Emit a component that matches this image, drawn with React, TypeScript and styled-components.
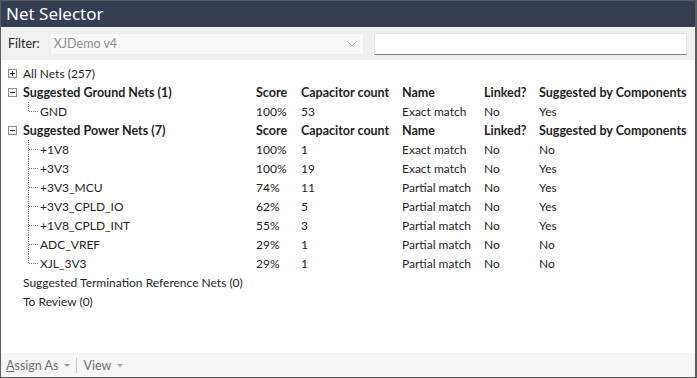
import React from 'react';
import styled, { createGlobalStyle } from 'styled-components';

interface INet {
  name: string;
  score: string;
  count: string;
  match: string;
  linked: string;
  byComponents: string;
}

const groundNets: INet[] = [
  { name: 'GND', score: '100%', count: '53', match: 'Exact match', linked: 'No', byComponents: 'Yes' },
];

const powerNets: INet[] = [
  { name: '+1V8', score: '100%', count: '1', match: 'Exact match', linked: 'No', byComponents: 'No' },
  { name: '+3V3', score: '100%', count: '19', match: 'Exact match', linked: 'No', byComponents: 'Yes' },
  { name: '+3V3_MCU', score: '74%', count: '11', match: 'Partial match', linked: 'No', byComponents: 'Yes' },
  { name: '+3V3_CPLD_IO', score: '62%', count: '5', match: 'Partial match', linked: 'No', byComponents: 'Yes' },
  { name: '+1V8_CPLD_INT', score: '55%', count: '3', match: 'Partial match', linked: 'No', byComponents: 'Yes' },
  { name: 'ADC_VREF', score: '29%', count: '1', match: 'Partial match', linked: 'No', byComponents: 'No' },
  { name: 'XJL_3V3', score: '29%', count: '1', match: 'Partial match', linked: 'No', byComponents: 'No' },
];

const columns = ['Score', 'Capacitor count', 'Name', 'Linked?', 'Suggested by Components'];

const GlobalStyle = createGlobalStyle`
  body {
    margin: 0;
    font-family: 'Segoe UI', Lato, 'Noto Sans', sans-serif;
  }
`;

const Window = styled.div`
  width: 697px;
  height: 378px;
  box-sizing: border-box;
  border: 1px solid #5c5c5c;
  border-right-width: 2px;
  display: flex;
  flex-direction: column;
  background: #ffffff;
`;

const TitleBar = styled.div`
  height: 26px;
  background: #353e52;
  color: #ffffff;
  font-family: 'Noto Sans', sans-serif;
  font-size: 17px;
  line-height: 26px;
  padding-left: 5px;
`;

const FilterBar = styled.div`
  height: 33px;
  background: #f0f0f0;
  display: flex;
  align-items: center;
  padding: 0 8px 0 7px;
  gap: 10px;
  font-size: 12.5px;
  color: #1e1e1e;
`;

const Combo = styled.div`
  width: 314px;
  height: 22px;
  box-sizing: border-box;
  background: #f8f8f8;
  border: 1px solid #ececec;
  color: #8a8a8a;
  display: flex;
  align-items: center;
  justify-content: space-between;
  padding: 0 6px 0 3px;
`;

const SearchBox = styled.div`
  flex: 1;
  height: 22px;
  box-sizing: border-box;
  background: #ffffff;
  border: 1px solid #e2e2e2;
  border-bottom: 1px solid #7a7a7a;
`;

const Tree = styled.div`
  flex: 1;
  padding-top: 4px;
  font-size: 12px;
  color: #1e1e1e;
`;

const Row = styled.div<{ $bold?: boolean }>`
  display: grid;
  grid-template-columns: 255px 45px 101px 82px 55px 1fr;
  height: 19px;
  align-items: center;
  font-weight: ${(p) => (p.$bold ? 700 : 400)};
  font-size: ${(p) => (p.$bold ? '12.5px' : '12px')};
  white-space: nowrap;
`;

const Label = styled.div<{ $indent: number }>`
  display: flex;
  align-items: center;
  height: 19px;
  padding-left: ${(p) => p.$indent}px;
`;

const Toggle = styled.span`
  width: 7px;
  height: 7px;
  border: 1px solid #8a8a8a;
  margin-right: 6px;
  position: relative;
  flex-shrink: 0;
  &::before {
    content: '';
    position: absolute;
    left: 1px;
    right: 1px;
    top: 3px;
    height: 1px;
    background: #222;
  }
`;

const Plus = styled(Toggle)`
  &::after {
    content: '';
    position: absolute;
    top: 1px;
    bottom: 1px;
    left: 3px;
    width: 1px;
    background: #222;
  }
`;

const Footer = styled.div`
  height: 24px;
  background: #f5f5f5;
  display: flex;
  align-items: center;
  padding-left: 5px;
  font-size: 12.5px;
  color: #6e6e6e;
`;

const MenuButton = styled.span`
  display: flex;
  align-items: center;
  gap: 6px;
  &::after {
    content: '';
    border-left: 3px solid transparent;
    border-right: 3px solid transparent;
    border-top: 3px solid #9a9a9a;
    margin-top: 1px;
  }
`;

const Separator = styled.span`
  width: 1px;
  height: 15px;
  background: #c8c8c8;
  margin: 0 6px 0 6px;
`;

const Branch: React.FC<{ last?: boolean }> = ({ last }) => (
  <svg width="12" height="19" style={{ flexShrink: 0 }}>
    <line x1="0.5" y1="0" x2="0.5" y2={last ? 10 : 19} stroke="#777" strokeDasharray="1 1" />
    <line x1="1" y1="9.5" x2="10" y2="9.5" stroke="#777" strokeDasharray="1 1" />
  </svg>
);

const NetRows: React.FC<{ nets: INet[] }> = ({ nets }) => (
  <>
    {nets.map((net, i) => (
      <Row key={net.name}>
        <Label $indent={27}>
          <Branch last={i === nets.length - 1} />
          {net.name}
        </Label>
        <div>{net.score}</div>
        <div>{net.count}</div>
        <div>{net.match}</div>
        <div>{net.linked}</div>
        <div>{net.byComponents}</div>
      </Row>
    ))}
  </>
);

const GroupHeader: React.FC<{ title: string }> = ({ title }) => (
  <Row $bold>
    <Label $indent={7}>
      <Toggle />
      {title}
    </Label>
    {columns.map((c) => (
      <div key={c}>{c}</div>
    ))}
  </Row>
);

export default function App() {
  return (
    <>
      <GlobalStyle />
      <Window>
        <TitleBar>Net Selector</TitleBar>
        <FilterBar>
          <span>Filter:</span>
          <Combo>
            <span>XJDemo v4</span>
            <svg width="10" height="6" viewBox="0 0 10 6">
              <polyline points="0.5,0.5 5,5 9.5,0.5" fill="none" stroke="#a8a8a8" />
            </svg>
          </Combo>
          <SearchBox />
        </FilterBar>
        <Tree>
          <Row>
            <Label $indent={7}>
              <Plus />
              All Nets (257)
            </Label>
          </Row>
          <GroupHeader title="Suggested Ground Nets (1)" />
          <NetRows nets={groundNets} />
          <GroupHeader title="Suggested Power Nets (7)" />
          <NetRows nets={powerNets} />
          <Row>
            <Label $indent={22}>Suggested Termination Reference Nets (0)</Label>
          </Row>
          <Row>
            <Label $indent={22}>To Review (0)</Label>
          </Row>
        </Tree>
        <Footer>
          <MenuButton>
            <span>
              <u>A</u>ssign As
            </span>
          </MenuButton>
          <Separator />
          <MenuButton>View</MenuButton>
        </Footer>
      </Window>
    </>
  );
}
